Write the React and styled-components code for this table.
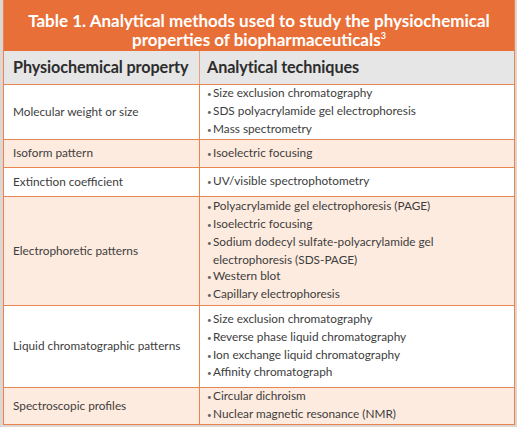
import React from "react";
import styled, { createGlobalStyle } from "styled-components";

const GlobalStyle = createGlobalStyle`
  html, body {
    margin: 0;
    padding: 0;
    background: #ddd6d2;
  }
  body {
    font-family: Lato, "Open Sans", sans-serif;
  }
`;

const Page = styled.div`
  width: 517px;
  height: 427px;
  padding: 0 2px 3px 3px;
  box-sizing: border-box;
`;

const Table = styled.div`
  width: 512px;
  border: 1.5px solid #e8854f;
  border-top: none;
  box-sizing: border-box;
  background: #fff;
`;

const Title = styled.div`
  background: #e96f38;
  color: #fff;
  font-weight: 700;
  font-size: 17px;
  line-height: 19.5px;
  text-align: center;
  height: 51px;
  padding-top: 10.5px;
  box-sizing: border-box;

  sup {
    font-size: 9px;
    vertical-align: 7px;
    line-height: 0;
  }
`;

const Row = styled.div`
  display: grid;
  grid-template-columns: 196px 1fr;
  height: ${(p) => p.$h}px;
  background: ${(p) => (p.$head ? "#e6e6e6" : p.$tint ? "#fdebdf" : "#fff")};
  border-top: ${(p) => (p.$head ? "none" : "1.5px solid #e8854f")};
  box-sizing: border-box;
`;

const Cell = styled.div`
  display: flex;
  flex-direction: column;
  justify-content: center;
  padding: 0 8px 0 ${(p) => (p.$first ? 9 : 7)}px;
  border-right: ${(p) => (p.$first ? "1.5px solid #e8854f" : "none")};
  color: #3d3d3d;
  font-size: 11.8px;
  line-height: 16.8px;
`;

const HeadCell = styled(Cell)`
  font-size: 16.2px;
  font-weight: 700;
  letter-spacing: -0.1px;
  white-space: nowrap;
  color: #2d2d2d;
  border-right-color: #e8a07c;
`;

const List = styled.ul`
  margin: 0;
  padding: 0;
  list-style: none;
`;

const Item = styled.li`
  padding-left: 6px;
  text-indent: -6px;

  &::before {
    content: "•";
    display: inline-block;
    width: 6px;
    text-indent: 0;
    font-size: 8px;
    color: #666;
  }
`;

const rows = [
  {
    name: "Molecular weight or size",
    h: 55,
    items: [
      "Size exclusion chromatography",
      "SDS polyacrylamide gel electrophoresis",
      "Mass spectrometry",
    ],
  },
  { name: "Isoform pattern", h: 28, tint: true, items: ["Isoelectric focusing"] },
  { name: "Extinction coefficient", h: 29, items: ["UV/visible spectrophotometry"] },
  {
    name: "Electrophoretic patterns",
    h: 109,
    tint: true,
    items: [
      "Polyacrylamide gel electrophoresis (PAGE)",
      "Isoelectric focusing",
      "Sodium dodecyl sulfate-polyacrylamide gel electrophoresis (SDS-PAGE)",
      "Western blot",
      "Capillary electrophoresis",
    ],
  },
  {
    name: "Liquid chromatographic patterns",
    h: 82,
    items: [
      "Size exclusion chromatography",
      "Reverse phase liquid chromatography",
      "Ion exchange liquid chromatography",
      "Affinity chromatograph",
    ],
  },
  {
    name: "Spectroscopic profiles",
    h: 37,
    tint: true,
    items: ["Circular dichroism", "Nuclear magnetic resonance (NMR)"],
  },
];

const App = () => {
  return (
    <Page>
      <GlobalStyle />
      <Table>
        <Title>
          <div>Table 1. Analytical methods used to study the physiochemical</div>
          <div>
            properties of biopharmaceuticals<sup>3</sup>
          </div>
        </Title>
        <Row $head $h={33}>
          <HeadCell $first>Physiochemical property</HeadCell>
          <HeadCell>Analytical techniques</HeadCell>
        </Row>
        {rows.map((r) => (
          <Row key={r.name} $h={r.h} $tint={r.tint}>
            <Cell $first>{r.name}</Cell>
            <Cell>
              <List>
                {r.items.map((it) => (
                  <Item key={it}>{it}</Item>
                ))}
              </List>
            </Cell>
          </Row>
        ))}
      </Table>
    </Page>
  );
};

export default App;
